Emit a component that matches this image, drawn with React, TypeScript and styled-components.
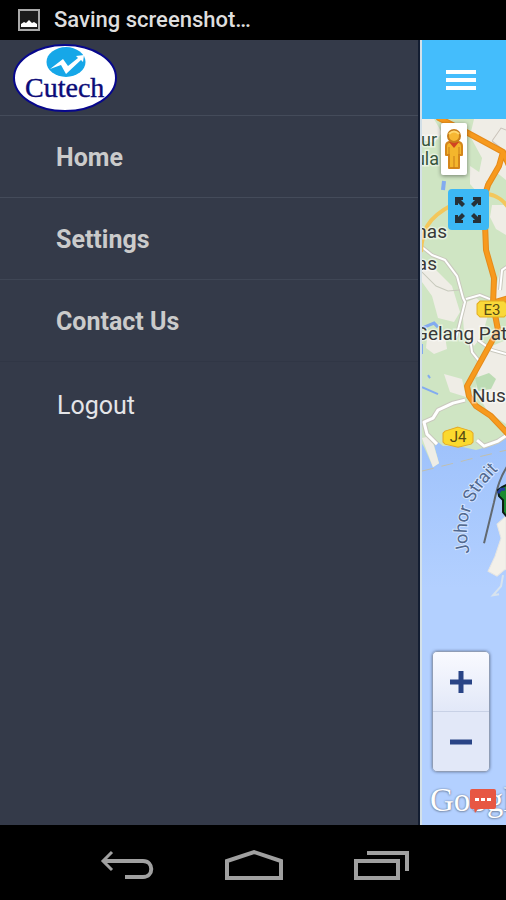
import React from "react";
import styled, { createGlobalStyle } from "styled-components";

const GlobalStyle = createGlobalStyle`
  * { box-sizing: border-box; }
  body { margin: 0; background: #000; font-family: Roboto, "Liberation Sans", sans-serif; }
  button { font: inherit; border: 0; padding: 0; cursor: pointer; }
`;

const Screen = styled.div`
  display: grid;
  grid-template-rows: 40px 1fr 75px;
  min-height: 100vh;
  overflow: hidden;
`;

const StatusBar = styled.header`
  display: flex;
  align-items: center;
  gap: 14px;
  padding: 0 18px;
  background: #000;
  color: #dedede;
  font-size: 22px;
  font-weight: 500;
  line-height: 40px;
`;

const Body = styled.div`
  display: flex;
  min-height: 0;
`;

const Drawer = styled.aside`
  flex: 0 0 83%;
  background: #343a49;
  border-right: 2px solid #131d31;
`;

const Brand = styled.div`
  height: 76px;
  padding: 4px 13px;
  border-bottom: 1px solid #444b5a;
`;

const MenuList = styled.ul`
  margin: 0;
  padding: 0;
  list-style: none;
`;

const MenuItem = styled.li<{ $line: string }>`
  border-bottom: 1px solid ${(p) => p.$line};
`;

const MenuLink = styled.a<{ $plain?: boolean }>`
  display: block;
  padding: ${(p) => (p.$plain ? "4px 57px 0" : "2px 56px 0")};
  font-size: 25px;
  line-height: 79px;
  font-weight: ${(p) => (p.$plain ? 400 : 700)};
  color: ${(p) => (p.$plain ? "#e4e5e8" : "#cbcbcb")};
  text-decoration: none;
`;

const Page = styled.main`
  flex: 1;
  min-width: 0;
  display: flex;
  flex-direction: column;
  overflow: hidden;
  border-left: 2px solid #d3e0e8;
`;

const AppBar = styled.div`
  flex: 0 0 79px;
  display: flex;
  align-items: center;
  padding-left: 24px;
  background: #44bdfc;
`;

const IconButton = styled.button`
  display: flex;
  background: transparent;
`;

const MapArea = styled.section`
  position: relative;
  flex: 1;
  overflow: hidden;
  background: #b3d0ff;
`;

const MapCanvas = styled.svg`
  position: absolute;
  inset: 0;
  width: 100%;
  height: 100%;
`;

const Pegman = styled.button`
  position: absolute;
  left: 19px;
  top: 4px;
  display: flex;
  justify-content: center;
  align-items: center;
  width: 26px;
  height: 52px;
  background: #fff;
  border-radius: 2px;
  box-shadow: 0 1px 4px rgba(0, 0, 0, 0.45);
`;

const ExpandButton = styled.button`
  position: absolute;
  left: 26px;
  top: 70px;
  display: flex;
  justify-content: center;
  align-items: center;
  width: 41px;
  height: 41px;
  background: #3cb8f5;
  border-radius: 4px;
`;

const ZoomControl = styled.div`
  position: absolute;
  left: 10px;
  bottom: 53px;
  display: flex;
  flex-direction: column;
  width: 58px;
  height: 121px;
  overflow: hidden;
  border: 1px solid #8f9db6;
  border-radius: 5px;
  box-shadow: 0 0 3px rgba(55, 70, 100, 0.7);
`;

const ZoomButton = styled.button`
  flex: 1;
  display: flex;
  justify-content: center;
  align-items: center;
  background: linear-gradient(#f9faff, #e2e8f8);
  & + & {
    border-top: 1px solid #c8d1e6;
    background: #e2e8f8;
  }
`;

const MapCredit = styled.a`
  position: absolute;
  left: 8px;
  bottom: 7px;
  font-family: "Liberation Serif", serif;
  font-size: 33px;
  line-height: 36px;
  color: #fff;
  text-decoration: none;
  text-shadow: 0 0 2px #61728f, 0 1px 2px #8495b2;
`;

const ChatButton = styled.button`
  position: absolute;
  left: 48px;
  bottom: 12px;
  display: flex;
  background: transparent;
`;

const NavBar = styled.nav`
  display: flex;
  justify-content: center;
  align-items: center;
  gap: 70px;
  padding: 4px 0 0 4px;
  background: #000;
`;

const menu = [
  { label: "Home", line: "#444b5a" },
  { label: "Settings", line: "#3f4655" },
  { label: "Contact Us", line: "#303645" },
  { label: "Logout", line: "transparent", plain: true },
];

const PictureIcon = () => (
  <svg width="22" height="22" viewBox="0 0 22 22" aria-hidden="true">
    <rect x="1" y="1" width="20" height="20" fill="#1c1c1c" stroke="#aaa" strokeWidth="2" />
    <path d="M3 18V15l3-2 2 1 3-3 3 3 2-1 3 2v3z" fill="#fff" />
  </svg>
);

const Logo = () => (
  <svg width="105" height="68" viewBox="0 0 105 68" role="img" aria-label="Cutech">
    <ellipse cx="52" cy="34" rx="51" ry="33" fill="#fff" stroke="#07078c" strokeWidth="2" />
    <ellipse cx="53" cy="18" rx="19.500" ry="15" fill="#16a7e8" />
    <path d="M37 25L50 15L55 22L65 14L63 12L71 11L70 18L68 16L53 30L48 21Z" fill="#fff" />
    <text
      x="12"
      y="53"
      fontFamily="Liberation Serif, serif"
      fontSize="28"
      fill="#0b0b78"
      stroke="#0b0b78"
      strokeWidth="0.400"
    >
      Cutech
    </text>
  </svg>
);

const highway =
  "M439 118L468 133L503 152L499 166L488 185L484 198L486 250L494 278L493 304L498 330L467 386L469 396L476 406L491 416L512 438M503 152L510 168M495 302L512 297";
const lanes =
  "M422 247l10 8 13 5 12 16 6 22 2 4-5 20-4 16M466 299l14-4 10 4M500 290l2-20 6-4M470 338l2 14 8 10M478 340l14 10 18 5";
const coastRoad = "M465 400l-12 3-15 7-5 8-9 4 3 12 10 10M477 440l7 6 14-5 12-8";

const MapDrawing = () => (
  <MapCanvas viewBox="422 119 84 706" preserveAspectRatio="xMinYMin slice" aria-label="Map" role="img">
    <defs>
      <linearGradient id="sea" x1="0" y1="0" x2="0" y2="1">
        <stop offset="0" stopColor="#9dc1fb" />
        <stop offset="0.400" stopColor="#b3d0ff" />
      </linearGradient>
      <path id="strait" d="M470 553C465 535 466 518 474 501C480 489 488 480 501 467" />
    </defs>
    <rect x="400" y="430" width="400" height="395" fill="url(#sea)" />
    <path d="M400 100H800V438H506L494 445L476 450L458 446H443L432 437L439 463L433 467L424 447L418 437Z" fill="#cfe5c3" />
    <g fill="#efede6">
      <path d="M474 119h32v61l-10-8-6 10-12-4 4-20-12-22z" />
      <path d="M422 119h12l8 14-8 10-12-3z" />
      <path d="M470 166l12 8 6 12-6 12-12-14z" />
      <path d="M492 205h14v30l-10-6-6-12z" />
      <path d="M422 262l14 8 16 16 8 26-6 10-16-4-6-22-10-14z" />
      <path d="M500 270h6v44l-14-6z" />
      <path d="M462 304l14-6 14 10-8 28-8 10-10-14z" />
      <path d="M492 346l14-6v84l-18-12-12-20 2-22z" />
      <path d="M427 339l18-3 2 13-13 5-8-6z" />
      <path d="M444 374l18 5 4 18-16-5z" />
      <path d="M422 438l9-2 8 27-6 4z" />
    </g>
    <path d="M475 378l14-5 7 6-5 10-13 2z" fill="#bcdcb4" />
    <path d="M492 141l9-13 12 5M492 141l10 8" stroke="#c9c2b9" strokeWidth="1" fill="none" />
    <g fill="none" strokeLinejoin="round">
      <path d={lanes} stroke="#c9c8bd" strokeWidth="4" />
      <path d={coastRoad} stroke="#c9c8bd" strokeWidth="5" />
      <path d={lanes} stroke="#fff" strokeWidth="2" />
      <path d={coastRoad} stroke="#fff" strokeWidth="3" />
    </g>
    <path d="M422 272l14 14 12 5 12-1" stroke="#c7c9bc" strokeWidth="1" fill="none" />
    <g stroke="#82abf0" fill="none">
      <path d="M444 181l-1 9" strokeWidth="4" />
      <path d="M422 328l12-5 4 4" strokeWidth="3" />
      <path d="M422 344v10M428 375l2 3M422 387l16 7" strokeWidth="2" />
    </g>
    <path d="M421 252C422 231 427 218 452 205M488 194C498 196 503 200 508 207" stroke="#f3c75c" strokeWidth="4" fill="none" />
    <g fill="none" strokeLinejoin="round" strokeLinecap="round">
      <path d={highway} stroke="#e58a1a" strokeWidth="6" />
      <path d={highway} stroke="#f79a1e" strokeWidth="4" />
    </g>
    <path d="M480 301h24l3 3v10l-3 3h-24l-3-3v-10z" fill="#f9d839" stroke="#e4ad20" />
    <path d="M458 427l13 4 2 2v9l-2 2-13 3-13-3-2-2v-9l2-2z" fill="#fbd92e" stroke="#e4a824" />
    <path d="M422 471l44-11 40-10" stroke="#c0bfae" strokeWidth="1" strokeDasharray="12 8" fill="none" />
    <path d="M506 516L497 524L501 538L495 556L488 571L497 576L504 570L506 569Z" fill="#f3f0e9" stroke="#e5e5e3" />
    <path d="M503 575l-2 11-8 9 6-1" fill="none" stroke="#d8e3ee" strokeWidth="2" />
    <g fontFamily="Roboto, sans-serif" fontSize="19" fill="#383838" stroke="#fff" strokeWidth="3" strokeOpacity="0.500" paintOrder="stroke">
      <text x="437" y="146" textAnchor="end" fontSize="18" fill="#36543b">ur</text>
      <text x="439" y="165" textAnchor="end" fontSize="18" fill="#36543b">ula</text>
      <text x="447" y="238" textAnchor="end">nas</text>
      <text x="437" y="270" textAnchor="end">as</text>
      <text x="415" y="340">Gelang Pat</text>
      <text x="472" y="402">Nus</text>
    </g>
    <g fontFamily="Roboto, sans-serif" fontSize="15" fill="#574b13" textAnchor="middle">
      <text x="492" y="315">E3</text>
      <text x="458" y="442">J4</text>
    </g>
    <text fontFamily="Roboto, sans-serif" fontSize="18" fill="#52698f" stroke="#d5e5ff" strokeWidth="2" paintOrder="stroke">
      <textPath href="#strait">Johor Strait</textPath>
    </text>
    <path d="M510 462C500 476 497 488 494 502L484 543" stroke="#626970" strokeWidth="2" fill="none" />
    <path d="M498 490l4-3 6-3v34l-5-6 0-12-4-4z" fill="#1b8a2f" stroke="#0b1b12" strokeWidth="2" />
    <path d="M498 493l3-4h4" fill="none" stroke="#223f9b" strokeWidth="3" />
  </MapCanvas>
);

const PegmanIcon = () => (
  <svg width="20" height="42" viewBox="0 0 20 42" aria-hidden="true">
    <path d="M5 14h10q3 1 3 4v9h-3v13H5V27H2v-9q0-3 3-4z" fill="#f4b62c" stroke="#d4861b" strokeWidth="2" strokeLinejoin="round" />
    <path d="M5 19v8M15 19v8M10 28v12" stroke="#c97d19" />
    <path d="M5 14h10l-5 6z" fill="#d24322" />
    <circle cx="10" cy="8" r="6" fill="#f7b733" stroke="#c77d1b" strokeWidth="2" />
    <path d="M5 6q5-5 10 0" fill="none" stroke="#ffd66c" strokeWidth="2" />
  </svg>
);

const ExpandIcon = () => (
  <svg width="26" height="26" viewBox="0 0 26 26" fill="#263138" aria-hidden="true">
    <path d="M0 0h8v3H6l4 4-3 3-4-4v2H0z" />
    <path d="M26 0v8h-3V6l-4 4-3-3 4-4h-2V0z" />
    <path d="M0 26v-8h3v2l4-4 3 3-4 4h2v3z" />
    <path d="M26 26h-8v-3h2l-4-4 3-3 4 4v-2h3z" />
  </svg>
);

export default function App() {
  return (
    <>
      <GlobalStyle />
      <Screen>
        <StatusBar>
          <PictureIcon />
          <span>Saving screenshot…</span>
        </StatusBar>
        <Body>
          <Drawer>
            <Brand><Logo /></Brand>
            <nav aria-label="Main">
              <MenuList>
                {menu.map((m) => (
                  <MenuItem key={m.label} $line={m.line}>
                    <MenuLink href="#" $plain={m.plain}>{m.label}</MenuLink>
                  </MenuItem>
                ))}
              </MenuList>
            </nav>
          </Drawer>
          <Page>
            <AppBar>
              <IconButton aria-label="Toggle menu">
                <svg width="30" height="20" viewBox="0 0 30 20" stroke="#fff" strokeWidth="4" aria-hidden="true">
                  <path d="M0 2h30M0 10h30M0 18h30" />
                </svg>
              </IconButton>
            </AppBar>
            <MapArea>
              <MapDrawing />
              <Pegman aria-label="Street view"><PegmanIcon /></Pegman>
              <ExpandButton aria-label="Full screen"><ExpandIcon /></ExpandButton>
              <ZoomControl>
                <ZoomButton aria-label="Zoom in">
                  <svg width="22" height="22" viewBox="0 0 22 22" stroke="#294486" strokeWidth="5" aria-hidden="true"><path d="M0 11h22M11 0v22" /></svg>
                </ZoomButton>
                <ZoomButton aria-label="Zoom out">
                  <svg width="22" height="22" viewBox="0 0 22 22" stroke="#294486" strokeWidth="5" aria-hidden="true"><path d="M0 11h22" /></svg>
                </ZoomButton>
              </ZoomControl>
              <MapCredit href="#">Google</MapCredit>
              <ChatButton aria-label="Messages">
                <svg width="26" height="24" viewBox="0 0 26 24" aria-hidden="true">
                  <path d="M2 0h22q2 0 2 2v16q0 2-2 2H8l-3 4-1-4H2q-2 0-2-2V2q0-2 2-2z" fill="#e75743" />
                  <path d="M5 9h4v3H5zM11 9h4v3h-4zM17 9h4v3h-4z" fill="#fff" />
                </svg>
              </ChatButton>
            </MapArea>
          </Page>
        </Body>
        <NavBar>
          <IconButton aria-label="Back">
            <svg width="54" height="32" viewBox="0 0 54 32" fill="none" stroke="#a0a0a0" strokeWidth="4" aria-hidden="true">
              <path d="M3 12h40c11 0 11 16 0 16H25" />
              <path d="M12 3L3 12l9 9" strokeWidth="3" />
            </svg>
          </IconButton>
          <IconButton aria-label="Home screen">
            <svg width="60" height="32" viewBox="0 0 60 32" fill="none" stroke="#a0a0a0" strokeWidth="4" aria-hidden="true">
              <path d="M3 29V12L30 3l27 9v17z" />
            </svg>
          </IconButton>
          <IconButton aria-label="Recent apps">
            <svg width="56" height="32" viewBox="0 0 56 32" fill="none" stroke="#a0a0a0" strokeWidth="4" aria-hidden="true">
              <path d="M2 12h42v17H2z" />
              <path d="M13 4h40v18" />
            </svg>
          </IconButton>
        </NavBar>
      </Screen>
    </>
  );
}
